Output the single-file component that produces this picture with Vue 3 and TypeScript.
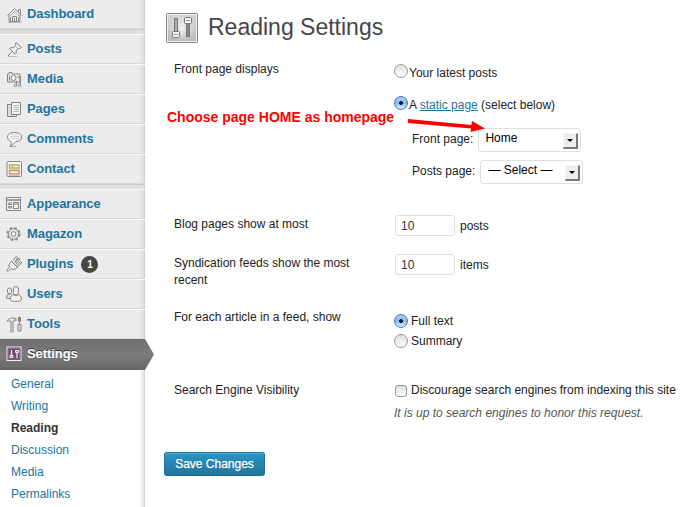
<script setup lang="ts">
import { ref } from 'vue'

interface MenuItem {
  id: string
  label: string
  badge?: number
}

const groups: MenuItem[][] = [
  [{ id: 'dashboard', label: 'Dashboard' }],
  [
    { id: 'posts', label: 'Posts' },
    { id: 'media', label: 'Media' },
    { id: 'pages', label: 'Pages' },
    { id: 'comments', label: 'Comments' },
    { id: 'contact', label: 'Contact' },
  ],
  [
    { id: 'appearance', label: 'Appearance' },
    { id: 'magazon', label: 'Magazon' },
    { id: 'plugins', label: 'Plugins', badge: 1 },
    { id: 'users', label: 'Users' },
    { id: 'tools', label: 'Tools' },
    { id: 'settings', label: 'Settings' },
  ],
]
const submenu: string[] = ['General', 'Writing', 'Reading', 'Discussion', 'Media', 'Permalinks']

const frontDisplay = ref<'posts' | 'page'>('page')
const feedMode = ref<'full' | 'summary'>('full')
const perPage = ref('10')
const perFeed = ref('10')
const discourage = ref(false)
</script>

<template>
  <div class="screen">
    <nav class="sidebar">
      <div v-for="(group, g) in groups" :key="g" class="group">
        <a v-for="item in group" :key="item.id" class="item" :class="{ current: item.id === 'settings' }">
          <svg class="icon" width="18" height="18" viewBox="0 0 18 18" fill="none" stroke="#858585" stroke-width="1">
            <template v-if="item.id === 'dashboard'">
              <path d="M1.500 9.500 8.500 2.500l7 7M3 8.500V15.500H14V8.500M12.500 6V3.500H14.500V8" stroke="#8c8c8c" />
              <path d="M4 10 8.500 5.500l4.500 4.500" stroke="#aaa" />
              <path d="M6.500 15V10.500H10.500V15M8.500 12V15M4.500 11V15M12.500 11V15" />
              <path d="M2 16.500h14" stroke="#bbb" />
            </template>
            <template v-else-if="item.id === 'posts'">
              <path d="m10 2.500 5.500 5-1.500 1-1.500-.5-2.500 3 .5 2-1.500 1-5.500-5.500 1.500-1 2 .5 3-2.500-.5-2zM6 11.500 2 16" fill="#f2f2f2" />
              <path d="M9.500 6.500 12 9" stroke="#aaa" />
              <path d="M2 16.500h9" stroke="#bbb" />
            </template>
            <template v-else-if="item.id === 'media'">
              <path d="M1.500 4H3V2.500h3V4h8v8H1.500z" fill="#e8e8e8" />
              <circle cx="7.500" cy="8" r="2.500" fill="#fff" />
              <path d="M3.500 5.500v5M14.500 15V7h-3.500M10.500 15V11" />
              <circle cx="9.500" cy="15.300" r="1.300" fill="#eee" /><circle cx="13.500" cy="15.300" r="1.300" fill="#eee" />
            </template>
            <template v-else-if="item.id === 'pages'">
              <path d="M5 4.500H1.500v12h9V15" fill="#ddd" />
              <path d="M5.500 2.500h9v12h-9z" fill="#f6f6f6" />
              <path d="M7.500 5.500H13M7.500 7.500H13M7.500 9.500H13M7.500 11.500H13" stroke="#b4b4b4" />
            </template>
            <template v-else-if="item.id === 'comments'">
              <path d="M8.500 2.500c4.500 0 7 1.500 7 4.500s-2 4.500-5.500 4.500C8.500 13 7 15 4.500 16c1-1.500 1-3 .5-4.500-2-.5-3.500-2-3.500-4.500 0-3 3-4.500 7-4.500z" fill="#f4f4f4" />
              <path d="M4 6.500h9M4 8.500h9M5 4.800h7" stroke="#d2d2d2" /><path d="M3 16.500h7" stroke="#aaa" />
            </template>
            <template v-else-if="item.id === 'contact'">
              <rect x="1" y="1.500" width="14.500" height="15" rx="1" fill="#f7f7f3" />
              <path d="M3.500 5h9.500v3h-9.500zM6.500 5v3" stroke="#afb855" stroke-width="1.300" />
              <path d="M3.500 10.500h9.500v3.500h-9.500z" stroke="#e28b78" stroke-width="1.500" />
              <path d="M3 9h10.500M3 15.200h10.500" stroke="#b9c07b" />
            </template>
            <template v-else-if="item.id === 'appearance'">
              <path d="M.5 2.500h14v13H.5z" fill="#f1f1f1" /><path d="M1 5h13" stroke-width="1.500" />
              <path d="M2.500 8h3v1.500h-3zM2.500 11.500h3v1.500h-3zM7.500 7.500h5v6h-5zM8 9h4" />
            </template>
            <template v-else-if="item.id === 'magazon'">
              <circle cx="7.500" cy="9" r="6.200" stroke-width="1.800" stroke-dasharray="2.700 2.169" stroke="#919191" />
              <circle cx="7.500" cy="9" r="5.200" fill="#e8e8e8" />
              <circle cx="7.500" cy="9" r="2.400" fill="#f5f5f5" />
            </template>
            <template v-else-if="item.id === 'plugins'">
              <path d="m5.500 6.500 6 6c-2 2-4.500 2.500-6.500 1L2 16.500.5 15.500 3.500 12c-1-2-.5-4 2-5.500z" fill="#f2f2f2" />
              <path d="m6.500 6.500 3.500-5 1.500 1-2.500 5M10.500 10.500l4.500-4 .5 1.500-4 4M6.500 7.500l5 4.500M9 7.500 13 3l1 1-4 5" />
            </template>
            <template v-else-if="item.id === 'users'">
              <rect x="1.500" y="3" width="4" height="6" rx="2" fill="#eee" />
              <rect x="7.500" y="1.500" width="5" height="8.500" rx="2.500" fill="#f2f2f2" />
              <path d="M4.500 9.500c-2.500-1-4 .5-4 3.500L5 14" fill="#e3e3e3" />
              <path d="M7.500 9.500c-2.500 1-3.500 3-3 5.500 2 2 8.500 2 11 0 0-3-1-5-3.500-5.500-1 1.500-3 1.500-4.500 0z" fill="#f2f2f2" />
            </template>
            <template v-else-if="item.id === 'tools'">
              <path d="M1 6c1-2 3-3 6.500-3H9v3H7v10.500H5V6H3.500z" fill="#eee" />
              <path d="M10 3v3M13.500 1.500v8M12.500 2v4l1 1 1-1V2M12 9.500h3v6.500h-3z" fill="#ddd" />
              <path d="M3 17h5" stroke="#bbb" />
            </template>
            <template v-else>
              <rect x="1" y="2" width="14" height="13.500" fill="#6d4b63" stroke="#f3e9f0" />
              <rect x="2.500" y="3.500" width="11" height="10.500" stroke="#8c6d84" />
              <path d="M5.500 5v5M11 8v5" stroke="#f5e9f2" stroke-width="1.300" />
              <path d="M4 10.500h3v2H4zM9.500 5.500h3v2h-3z" fill="#a98aa0" stroke="#f5e9f2" />
            </template>
          </svg>
          <span class="label">{{ item.label }}</span>
          <span v-if="item.badge" class="badge">{{ item.badge }}</span>
        </a>
      </div>
      <ul class="submenu">
        <li v-for="entry in submenu" :key="entry" :class="{ active: entry === 'Reading' }">{{ entry }}</li>
      </ul>
    </nav>

    <main class="content">
      <header class="title">
        <svg width="34" height="32" viewBox="0 0 34 32">
          <defs>
            <linearGradient id="panel" x2="0" y2="1"><stop stop-color="#d6d6d6" /><stop offset="1" stop-color="#b8b8b8" /></linearGradient>
            <radialGradient id="shine"><stop stop-color="#fff" stop-opacity=".75" /><stop offset="1" stop-color="#fff" stop-opacity="0" /></radialGradient>
          </defs>
          <rect x="1.500" y="1.500" width="31" height="29" rx="1" fill="url(#panel)" stroke="#858585" />
          <rect x="2.500" y="2.500" width="29" height="27" fill="url(#shine)" stroke="#eee" />
          <rect x="9.500" y="6.500" width="3" height="13" fill="#aaa" stroke="#777" />
          <rect x="21.500" y="11.500" width="3" height="13" fill="#888" stroke="#777" />
          <rect x="7.500" y="19.500" width="7" height="6" rx="1" fill="#f4f4f4" stroke="#777" />
          <rect x="19.500" y="5.500" width="7" height="6" rx="1" fill="#f4f4f4" stroke="#777" />
          <path d="M9 22.500h4M21 8.500h4" stroke="#999" />
        </svg>
        <h1>Reading Settings</h1>
      </header>

      <section class="row front">
        <div class="name">Front page displays</div>
        <div class="field">
          <label class="choice"><input v-model="frontDisplay" type="radio" value="posts"><span>Your latest posts</span></label>
          <label class="choice second"><input v-model="frontDisplay" type="radio" value="page"><span>A <a>static page</a> (select below)</span></label>
          <div class="picker"><span>Front page:</span><div class="select"><span>Home</span><i class="arrow"></i></div></div>
          <div class="picker lower"><span>Posts page:</span><div class="select"><span>— Select —</span><i class="arrow"></i></div></div>
        </div>
      </section>
      <section class="row blog">
        <div class="name">Blog pages show at most</div>
        <div class="field amount"><input v-model="perPage" type="text"><span>posts</span></div>
      </section>
      <section class="row feeds">
        <div class="name">Syndication feeds show the most recent</div>
        <div class="field amount"><input v-model="perFeed" type="text"><span>items</span></div>
      </section>
      <section class="row article">
        <div class="name">For each article in a feed, show</div>
        <div class="field">
          <label class="choice wide"><input v-model="feedMode" type="radio" value="full"><span>Full text</span></label>
          <label class="choice wide"><input v-model="feedMode" type="radio" value="summary"><span>Summary</span></label>
        </div>
      </section>
      <section class="row search">
        <div class="name">Search Engine Visibility</div>
        <div class="field">
          <label class="choice check"><input v-model="discourage" type="checkbox"><span>Discourage search engines from indexing this site</span></label>
          <p>It is up to search engines to honor this request.</p>
        </div>
      </section>
      <button class="save" type="button">Save Changes</button>
    </main>

    <div class="note">Choose page HOME as homepage</div>
    <svg class="pointer" width="78" height="18" viewBox="0 0 78 18">
      <path d="M0 2 63.500 8 64 4 77 11.500 62.500 15l.5-3.500L0 6z" fill="#f00" />
    </svg>
  </div>
</template>

<style>
body { margin: 0; overflow: hidden; background: #fff; }
</style>

<style scoped>
* { box-sizing: border-box; }
.screen {
  position: relative;
  display: flex;
  width: 686px;
  height: 507px;
  overflow: hidden;
  background: #fff;
  color: #222;
  font: 12px/18px "Liberation Sans", Arial, sans-serif;
}
.sidebar {
  width: 145px;
  flex: none;
  height: 507px;
  background: linear-gradient(90deg, transparent 138px, #e2e2e2 143px, #c9c9c9 145px), #ececec;
}
.group + .group {
  border-top: 1px solid #ccc;
  padding-top: 4px;
  background: linear-gradient(#dfdfdf, #dfdfdf) 0 0 / 144px 4px no-repeat;
}
.group:first-child .item { height: 29px; border-top: 0; }
.item {
  display: flex;
  align-items: center;
  height: 30px;
  padding-left: 6px;
  border-top: 1px solid #f9f9f9;
  border-bottom: 1px solid #d8d8d8;
  color: #21759b;
  font-size: 13px;
  font-weight: bold;
  letter-spacing: -0.08px;
}
.icon { flex: none; margin-right: 3px; }
.group:first-child .icon { margin-top: 2px; }
.badge {
  width: 17px;
  height: 17px;
  margin-left: 8px;
  border-radius: 50%;
  background: #464646;
  color: #fff;
  font-size: 10px;
  line-height: 17px;
  text-align: center;
}
.item.current {
  position: relative;
  width: 154px;
  height: 31px;
  padding-bottom: 1px;
  background: linear-gradient(#6e6e6e, #7c7c7c 50%, #666);
  border: 0;
  clip-path: polygon(0 0, 145px 0, 100% 50%, 145px 100%, 0 100%);
  color: #fff;
  text-shadow: 0 -1px 0 #333;
}
.submenu {
  width: 145px;
  height: 137px;
  margin: 0;
  padding: 3px 0 0 11px;
  list-style: none;
  background: linear-gradient(90deg, #fff 139px, #eee 143px, #ccc 145px);
  color: #21759b;
  line-height: 22px;
}
.active { color: #333; font-weight: bold; }
.content { flex: 1; padding: 11px 0 0 19px; }
.title { display: flex; align-items: center; height: 33px; gap: 9px; padding-left: 1px; }
.title h1 { margin: 0 0 2px; color: #464646; font-size: 23px; font-weight: normal; line-height: 30px; }
.row { display: grid; grid-template-columns: 220px 1fr; padding-left: 10px; }
.name { width: 190px; }
.front { height: 171px; padding-top: 16px; }
.blog { height: 39px; }
.feeds { height: 54px; }
.feeds .name { line-height: 17px; padding-top: 1px; }
.article { height: 73px; }
.search { height: 71px; }
.choice { display: flex; align-items: center; height: 20px; gap: 2px; white-space: nowrap; }
.front .choice { height: 26px; gap: 1px; }
.front .second { margin-top: 6px; }
.choice.wide { gap: 3px; }
.article .field { padding-top: 3px; }
.choice input {
  appearance: none;
  flex: none;
  width: 14px;
  height: 14px;
  margin: 0;
  border: 1px solid #999;
  border-radius: 50%;
  background: linear-gradient(#dedede, #fff);
}
.front .choice input { margin-top: -4px; }
.choice input[type="radio"]:checked {
  border-color: #5670a5;
  background: radial-gradient(circle at center, #101b38 0 1.6px, transparent 2.2px), linear-gradient(#a8cff6, #85bced 50%, #d4f4ff);
}
.choice a { color: #21759b; text-decoration: underline; }
.choice.check { height: 18px; gap: 0; }
.check input { width: 12px; height: 12px; margin: 2px 4px 0 1px; border-radius: 3px; }
.picker { display: flex; align-items: center; height: 24px; margin: 10px 0 0 18px; gap: 5px; }
.picker > span { position: relative; top: -1px; }
.picker.lower { margin-top: 8px; }
.select {
  display: flex;
  align-items: center;
  justify-content: space-between;
  width: 103px;
  height: 24px;
  padding: 0 2px 0 6px;
  border: 1px solid #dfdfdf;
  border-radius: 3px;
  color: #000;
}
.select > span { position: relative; top: -2px; }
.lower .select > span { padding-left: 1px; }
.arrow {
  display: flex;
  align-items: center;
  justify-content: center;
  width: 15px;
  height: 16px;
  margin-top: 2px;
  border: solid;
  border-width: 1px 2px 2px 1px;
  border-color: #f5f5f5 #777 #777 #f5f5f5;
  background: #eee;
}
.arrow::after { content: ""; border: 3px solid transparent; border-top: 3px solid #000; border-bottom: 0; }
.amount { display: flex; align-items: center; height: 21px; gap: 5px; padding-left: 1px; }
.amount input {
  width: 60px;
  height: 21px;
  padding: 0 5px;
  border: 1px solid #dfdfdf;
  border-radius: 3px;
  color: #333;
  font: inherit;
}
.search p { margin: 5px 0 0; color: #555; font-style: italic; }
.save {
  display: block;
  width: 101px;
  height: 24px;
  padding: 0 0 1px;
  border: 1px solid #21759b;
  border-bottom-color: #1e6a8d;
  border-radius: 3px;
  background: linear-gradient(#2a95c5, #21759b);
  box-shadow: inset 0 1px 0 rgba(120, 200, 230, 0.5);
  color: #fff;
  font: inherit;
  text-shadow: 0 1px 0 rgba(0, 0, 0, 0.1);
  -webkit-text-stroke: 0.25px #fff;
}
.note {
  position: absolute;
  left: 167px;
  top: 108px;
  color: #f00;
  font-size: 14px;
  font-weight: bold;
  white-space: nowrap;
}
.pointer { position: absolute; left: 408px; top: 117px; }
</style>
